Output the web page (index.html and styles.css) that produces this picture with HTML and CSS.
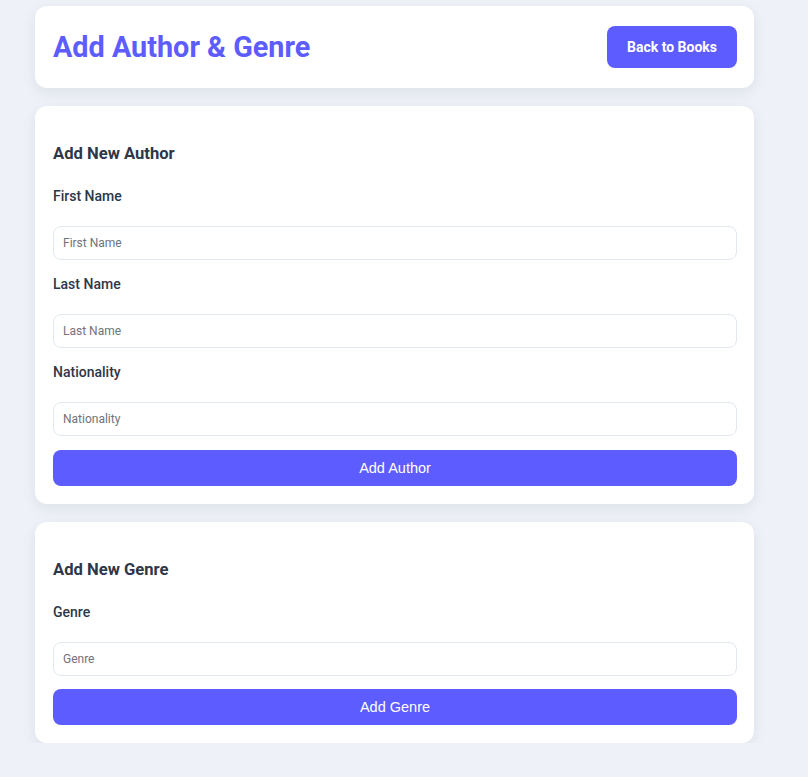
FILE: index.html
```html
<!DOCTYPE html>
<html lang="en">
<head>
<meta charset="utf-8">
<title>Add Author &amp; Genre</title>
<link rel="stylesheet" href="styles.css">
</head>
<body>
<div class="container">
  <header class="card header">
    <h1 class="title">Add Author &amp; Genre</h1>
    <button class="btn-back" type="button">Back to Books</button>
  </header>

  <section class="card form-card">
    <h3 class="section-title">Add New Author</h3>
    <div class="field">
      <label class="label">First Name</label>
      <input class="input" type="text" placeholder="First Name">
    </div>
    <div class="field">
      <label class="label">Last Name</label>
      <input class="input" type="text" placeholder="Last Name">
    </div>
    <div class="field">
      <label class="label">Nationality</label>
      <input class="input" type="text" placeholder="Nationality">
    </div>
    <button class="btn-submit" type="button">Add Author</button>
  </section>

  <section class="card form-card">
    <h3 class="section-title">Add New Genre</h3>
    <div class="field">
      <label class="label">Genre</label>
      <input class="input" type="text" placeholder="Genre">
    </div>
    <button class="btn-submit" type="button">Add Genre</button>
  </section>
</div>
</body>
</html>
```

FILE: styles.css
```css
* { box-sizing: border-box; }

body {
  margin: 0;
  background: #eef1f7;
  font-family: Roboto, "Liberation Sans", Arial, sans-serif;
  color: #2d3748;
}

.container {
  width: 719px;
  margin-left: 35px;
  padding-top: 6px;
  display: flex;
  flex-direction: column;
  gap: 18px;
}

.card {
  background: #ffffff;
  border-radius: 12px;
  box-shadow: 0 4px 14px rgba(30, 41, 59, 0.08);
}

.header {
  display: flex;
  align-items: center;
  justify-content: space-between;
  padding: 20px 17px 20px 18px;
}

.title {
  margin: 0;
  font-size: 28.8px;
  font-weight: 700;
  color: #5d5cff;
  line-height: 1;
}

.btn-back {
  height: 42px;
  width: 130px;
  border: none;
  border-radius: 8px;
  background: #5d5cff;
  color: #ffffff;
  font-family: Roboto, sans-serif;
  font-weight: 700;
  font-size: 14px;
}

.form-card {
  padding: 18px 17px 18px 18px;
  display: flex;
  flex-direction: column;
}

.section-title {
  margin: 21px 0 24px;
  font-size: 16.6px;
  font-weight: 700;
  color: #2d3748;
  line-height: 18.75px;
}

.field {
  display: flex;
  flex-direction: column;
  margin-bottom: 16.3px;
}

.field:nth-last-of-type(1) { margin-bottom: 13.5px; }

.label {
  font-size: 14px;
  font-weight: 500;
  line-height: 16.4px;
  color: #2d3748;
  margin-bottom: 21.6px;
}

.input {
  height: 34px;
  border: 1px solid #e2e8f0;
  border-radius: 8px;
  padding: 0 9px;
  font-family: Roboto, sans-serif;
  font-size: 12px;
  color: #2d3748;
  background: #fff;
}

.input::placeholder { color: #707379; }

.btn-submit {
  height: 36px;
  width: 100%;
  border: none;
  border-radius: 8px;
  background: #5d5cff;
  color: #ffffff;
  font-family: "Liberation Sans", Arial, sans-serif;
  font-size: 14.5px;
}
```
